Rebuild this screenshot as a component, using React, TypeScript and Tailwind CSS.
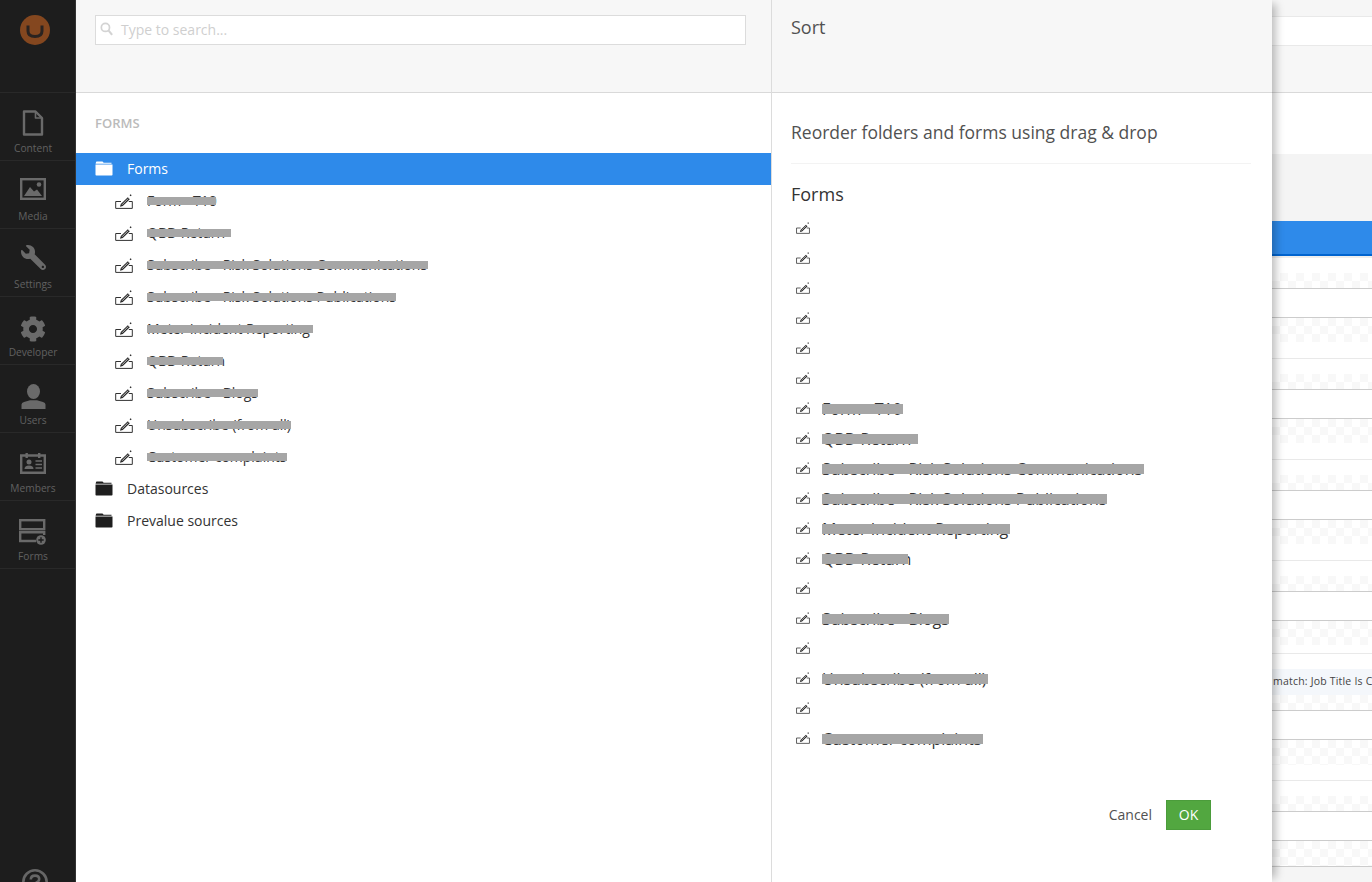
import React from "react";
import { FaCog, FaWrench } from "react-icons/fa";

const EditIcon = ({ small }: { small?: boolean }) => (
  <svg width={small ? 14 : 18} height={small ? 12 : 15} viewBox="0 0 18 15" fill="none" className={`shrink-0 ${small ? "-translate-y-px" : ""}`}>
    <path d="M6 7.5H0.7V14.4H17.3V7.5H13.8" stroke="#333" strokeWidth="1" />
    <path d="M5 12.8L5.8 10L12.8 3.2L14.8 5.2L7.8 12Z" fill="#2a2a2a" />
    <path d="M15.6 0.2L16.6 1.2L15.6 2.2L14.6 1.2Z" fill="#222" />
    <path d="M7 10.8L13.2 4.6" stroke="#fff" strokeWidth="0.7" />
  </svg>
);

const FolderIcon = ({ color }: { color: string }) => (
  <svg width="18" height="15" viewBox="0 0 18 15" className="shrink-0">
    <path d="M1 1.3Q1 0.5 1.8 0.5H7.5L8.7 1.8H16.5V2.8H0.6Z" fill={color} />
    <path d="M0.5 3.6H17.5V13.7Q17.5 14.5 16.7 14.5H1.3Q0.5 14.5 0.5 13.7Z" fill={color} />
  </svg>
);

const Redacted = ({ text, bar, tall }: { text: string; bar: string; tall?: boolean }) => (
  <span className="relative inline-block whitespace-nowrap">
    <span>{text}</span>
    <span className={`absolute left-0 bg-[#a6a6a6] ${tall ? "top-[7px] h-[10px]" : "top-[6px] h-[8px]"} ${bar}`} />
  </span>
);

const leftForms = [
  ["Form - T10", "w-[69px]"],
  ["QBD Return", "w-[84px]"],
  ["Subscribe - Risk Solutions Communications", "w-[281px]"],
  ["Subscribe - Risk Solutions Publications", "w-[249px]"],
  ["Meter Incident Reporting", "w-[166px]"],
  ["QBD Return", "w-[76px]"],
  ["Subscribe - Blogs", "w-[111px]"],
  ["Unsubscribe (from all)", "w-[144px]"],
  ["Customer complaints", "w-[140px]"],
];

const rightForms: (string[] | null)[] = [
  null, null, null, null, null, null,
  ["Form - T10", "w-[81px]"],
  ["QBD Return", "w-[96px]"],
  ["Subscribe - Risk Solutions Communications", "w-[322px]"],
  ["Subscribe - Risk Solutions Publications", "w-[285px]"],
  ["Meter Incident Reporting", "w-[188px]"],
  ["QBD Return", "w-[86px]"],
  null,
  ["Subscribe - Blogs", "w-[127px]"],
  null,
  ["Unsubscribe (from all)", "w-[166px]"],
  null,
  ["Customer complaints", "w-[161px]"],
];

const navIcon = "text-[#6a6a6a]";
const nav: [string, React.ReactNode, string][] = [
  ["Content", (
    <svg width="22" height="26" viewBox="0 0 22 26" fill="none" stroke="#6a6a6a" strokeWidth="2.4" strokeLinejoin="round">
      <path d="M2 1.5H13.5L20 8V24.5H2Z" />
      <path d="M13.5 1.5V8H20" strokeWidth="1.6" />
    </svg>
  ), "mt-[1px]"],
  ["Media", (
    <svg width="26" height="22" viewBox="0 0 26 22">
      <rect x="1.2" y="1.2" width="23.6" height="19.6" fill="none" stroke="#6a6a6a" strokeWidth="2.4" />
      <path d="M4 18L10 9L14 13.5L17 11.5L22 18Z" fill="#6a6a6a" />
      <circle cx="19" cy="6.5" r="2.3" fill="#6a6a6a" />
    </svg>
  ), "mt-[1px]"],
  ["Settings", <FaWrench size={25} className={`${navIcon} -scale-x-100`} />, ""],
  ["Developer", <FaCog size={26} className={navIcon} />, "mt-[3px]"],
  ["Users", (
    <svg width="25" height="25" viewBox="0 0 25 25" fill="#6a6a6a">
      <ellipse cx="12.5" cy="7.5" rx="6.5" ry="7.5" />
      <path d="M0.5 25V20.5Q0.5 18.5 3 18L9 16.2H16L22 18Q24.5 18.5 24.5 20.5V25Z" />
    </svg>
  ), "mt-[3px]"],
  ["Members", (
    <svg width="26" height="21" viewBox="0 0 26 21">
      <path d="M1.2 2.5H24.8V19.8H1.2Z" fill="none" stroke="#6a6a6a" strokeWidth="2.4" />
      <rect x="5.5" y="0" width="2.4" height="5" fill="#6a6a6a" />
      <rect x="18" y="0" width="2.4" height="5" fill="#6a6a6a" />
      <circle cx="9" cy="9" r="2.5" fill="#6a6a6a" />
      <path d="M4.5 16Q4.5 12.5 9 12.5Q13.5 12.5 13.5 16Z" fill="#6a6a6a" />
      <path d="M15.5 8H22M15.5 11.5H22M15.5 15H22" stroke="#6a6a6a" strokeWidth="1.6" />
    </svg>
  ), "mt-[4px]"],
  ["Forms", (
    <svg width="28" height="26" viewBox="0 0 28 26">
      <rect x="1.2" y="1.2" width="24" height="9" fill="none" stroke="#6a6a6a" strokeWidth="2.4" />
      <path d="M17 22H1.2V13.3H25.2V16" fill="none" stroke="#6a6a6a" strokeWidth="2.4" />
      <circle cx="22" cy="21" r="4.8" fill="#6a6a6a" />
      <path d="M22 18.3V23.7M19.3 21H24.7" stroke="#1d1d1d" strokeWidth="1.4" />
    </svg>
  ), "mt-[2px]"],
];

const Checker = ({ h }: { h: string }) => (
  <div className={`${h} bg-white bg-[conic-gradient(#f8f8f8_25%,#ffffff_0_50%,#f8f8f8_0_75%,#ffffff_0)] bg-[length:16px_16px]`} />
);
const White = ({ h }: { h: string }) => <div className={`${h} bg-white`} />;
const Line = ({ light }: { light?: boolean }) => (
  <div className={`h-px ${light ? "bg-[#e9e9e9]" : "bg-[#cccccc]"}`} />
);

const TableGroup = () => (
  <>
    <White h="h-[15px]" />
    <Checker h="h-[15px]" />
    <Line />
    <White h="h-[28px]" />
    <Line />
    <Checker h="h-[24px]" />
    <White h="h-[16px]" />
    <Line light />
  </>
);

export default function App() {
  return (
    <div className="flex h-[882px] w-[1372px] overflow-hidden bg-white font-['Open_Sans',sans-serif] text-[14px] text-[#333]">
      {/* Section rail */}
      <aside className="flex w-[76px] shrink-0 flex-col overflow-hidden border-r border-[#333] bg-[#1d1d1d]">
        <div className="flex h-[92px] shrink-0 justify-start pl-[20px] pt-[15px]">
          <svg width="30" height="30" viewBox="0 0 30 30">
            <circle cx="15" cy="15" r="15" fill="#84471f" />
            <path d="M8 10.5V16Q8 21.5 15 21.5Q22 21.5 22 16V10.5" fill="none" stroke="#2a2320" strokeWidth="3" />
          </svg>
        </div>
        {nav.map(([label, icon, shift]) => (
          <div
            key={label}
            className="flex h-[68px] shrink-0 flex-col items-center border-t border-[#292929] pr-[9px] pt-[16px] text-[10.2px] leading-[14px] text-[#616161]"
          >
            <div className="flex h-[31px] items-start justify-center">
              <div className={`flex ${shift}`}>{icon}</div>
            </div>
            <span className="mt-[1px]">{label}</span>
          </div>
        ))}
        <div className="h-px shrink-0 bg-[#292929]" />
        <div className="mt-auto -mb-[13px] flex shrink-0 justify-start pl-[22px]">
          <svg width="26" height="26" viewBox="0 0 26 26" fill="none" stroke="#666" strokeWidth="2.6">
            <circle cx="13" cy="13" r="11.7" />
            <path d="M8.8 10.5Q8.8 6.6 13 6.6Q17.2 6.6 17.2 10Q17.2 12 15 13.2Q13 14.3 13 16.5" />
          </svg>
        </div>
      </aside>

      {/* Tree panel */}
      <section className="flex w-[696px] shrink-0 flex-col border-r border-[#dcdcdc]">
        <header className="h-[93px] shrink-0 border-b border-[#d9d9d9] bg-[#f7f7f7] pl-[19px] pr-[25px] pt-[15px]">
          <div className="flex h-[30px] items-center border border-[#dcdcdc] bg-white pb-[2px] pl-[4px]">
            <svg width="13" height="14" viewBox="0 0 12 13" fill="none" stroke="#d3d3d3" strokeWidth="1.6">
              <circle cx="5" cy="5" r="3.8" />
              <path d="M8 8L11.2 12" strokeWidth="2" />
            </svg>
            <span className="ml-[8px] text-[#cfcfcf]">Type to search...</span>
          </div>
        </header>
        <div className="flex h-[60px] shrink-0 items-center pl-[19px] pt-[2px] text-[13px] font-semibold text-[#bbbbbb]">FORMS</div>
        <div className="flex h-[32px] items-center gap-[14px] bg-[#2e8aea] pb-[2px] pl-[19px] text-white">
          <FolderIcon color="#ffffff" />
          <span>Forms</span>
        </div>
        {leftForms.map(([name, bar], i) => (
          <div key={i} className="flex h-[32px] items-center gap-[14px] pl-[39px]">
            <EditIcon />
            <span className="leading-[20px]">
              <Redacted text={name} bar={bar} />
            </span>
          </div>
        ))}
        <div className="flex h-[32px] items-center gap-[14px] pb-[2px] pl-[19px]">
          <FolderIcon color="#1e1e1e" />
          <span>Datasources</span>
        </div>
        <div className="flex h-[32px] items-center gap-[14px] pb-[2px] pl-[19px]">
          <FolderIcon color="#1e1e1e" />
          <span>Prevalue sources</span>
        </div>
      </section>

      {/* Sort panel */}
      <section className="relative z-10 flex w-[500px] shrink-0 flex-col bg-white shadow-[8px_0_8px_-4px_rgba(0,0,0,0.25)]">
        <header className="h-[93px] shrink-0 border-b border-[#d9d9d9] bg-[#f7f7f7] pl-[19px] pt-[14px] text-[18px] leading-[26px] text-[#515151]">
          Sort
        </header>
        <div className="flex flex-1 flex-col pl-[19px] pr-[21px]">
          <div className="flex h-[71px] shrink-0 items-end border-b border-[#f3f3f3] pb-[18px] text-[17.5px] leading-[26px] text-[#515151]">
            Reorder folders and forms using drag &amp; drop
          </div>
          <h2 className="mt-[17px] h-[26px] text-[18px] font-medium leading-[26px] text-[#333]">Forms</h2>
          <div className="mt-[7px] flex flex-col">
            {rightForms.map((f, i) => (
              <div key={i} className="flex h-[30px] items-center gap-[12px] pl-[5px] text-[16px]">
                <EditIcon small />
                {f && <Redacted text={f[0]} bar={f[1]} tall />}
              </div>
            ))}
          </div>
          <div className="mt-[46px] flex items-center justify-end gap-[14px] pr-[40px]">
            <span className="pb-[2px] text-[14px] text-[#515151]">Cancel</span>
            <button className="h-[30px] w-[45px] border border-[#4b9c3b] bg-[#52a740] pb-[1px] text-[14px] font-medium text-white">OK</button>
          </div>
        </div>
      </section>

      {/* Page behind the dialog */}
      <div className="flex min-w-0 flex-1 flex-col overflow-hidden">
        <div className="h-[16px] shrink-0 bg-[#f6f6f6]" />
        <Line light />
        <White h="h-[28px] shrink-0" />
        <Line light />
        <div className="h-[46px] shrink-0 bg-[#f7f7f7]" />
        <div className="h-px shrink-0 bg-[#d9d9d9]" />
        <White h="h-[61px] shrink-0" />
        <div className="h-[67px] shrink-0 bg-[#f4f4f4]" />
        <div className="h-[35px] shrink-0 border-b-2 border-[#0064cf] bg-[#2e8aea]" />
        <div className="h-[2px] shrink-0 bg-[#eeeeee]" />
        <TableGroup />
        <TableGroup />
        <TableGroup />
        <White h="h-[15px]" />
        <Checker h="h-[15px]" />
        <Line />
        <White h="h-[28px]" />
        <Line />
        <Checker h="h-[24px]" />
        <White h="h-[8px]" />
        <Line light />
        <White h="h-[15px]" />
        <div className="flex h-[26px] items-center whitespace-nowrap bg-[#f4f7fb] pl-[1px] text-[10.5px] tracking-[0.2px] text-[#444]">
          match: Job Title Is C
        </div>
        <Checker h="h-[15px]" />
        <Line />
        <White h="h-[28px]" />
        <Line />
        <Checker h="h-[25px]" />
        <White h="h-[15px]" />
        <Line light />
        <White h="h-[15px]" />
        <Checker h="h-[15px]" />
        <Line />
        <White h="h-[28px]" />
        <Line />
        <Checker h="h-[25px]" />
        <Line />
        <div className="flex-1 bg-[#f5f5f5]" />
      </div>
    </div>
  );
}
